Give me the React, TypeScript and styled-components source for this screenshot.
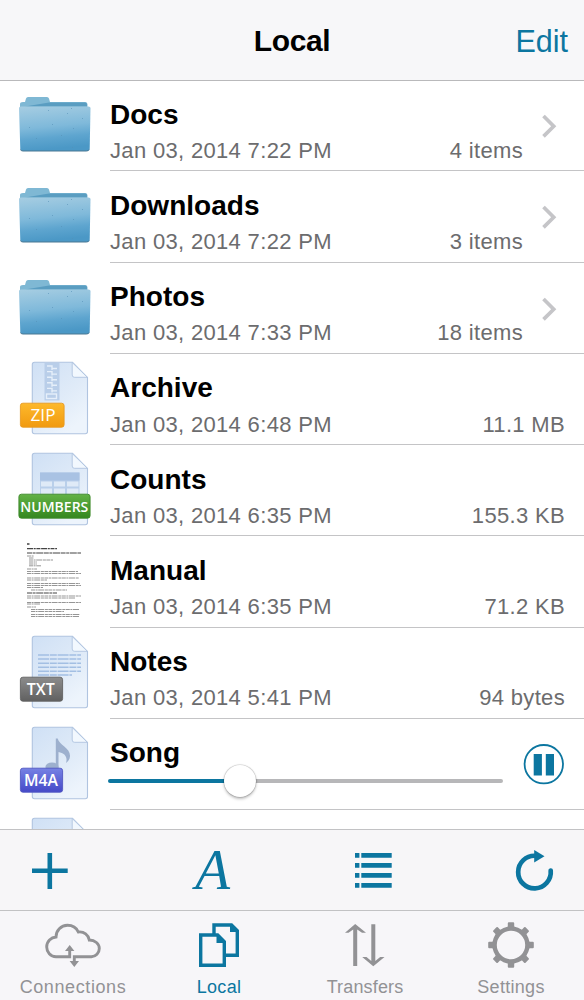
import React from "react";
import styled, { createGlobalStyle } from "styled-components";

const ACCENT = "#0c76a0";
const MUTED = "#929295";

const GlobalStyle = createGlobalStyle`
  * { box-sizing: border-box; }
  body {
    margin: 0;
    background: #fff;
    font-family: "Liberation Sans", Arial, sans-serif;
    -webkit-font-smoothing: antialiased;
  }
  svg { display: block; }
`;

const Screen = styled.div`
  width: 584px;
  height: 1000px;
  display: flex;
  flex-direction: column;
  overflow: hidden;
  background: #fff;
`;

const Header = styled.header`
  flex: none;
  height: 81px;
  margin-bottom: -1px;
  display: grid;
  grid-template-columns: 1fr auto 1fr;
  align-items: center;
  padding: 2px 16px 0;
  background: #f7f7f9;
  border-bottom: 1px solid #b9b9bb;
`;

const HeaderTitle = styled.h1`
  grid-column: 2;
  margin: 0;
  font-size: 30px;
  line-height: 34px;
  letter-spacing: -0.4px;
  color: #000;
`;

const EditButton = styled.button`
  justify-self: end;
  padding: 0;
  border: 0;
  background: none;
  font-family: inherit;
  font-size: 30.5px;
  line-height: 34px;
  color: ${ACCENT};
`;

const List = styled.main`
  flex: none;
  height: 749px;
  overflow: hidden;
`;

const Row = styled.div`
  height: 91.25px;
  display: flex;
`;

const IconCell = styled.div`
  flex: none;
  width: 110px;
`;

const RowBody = styled.div`
  flex: 1;
  min-width: 0;
  display: flex;
  border-bottom: 1px solid #c4c4c6;
`;

const RowText = styled.div<{ $right: number }>`
  flex: 1;
  padding: 18.7px ${(p) => p.$right}px 0 0;
`;

const Name = styled.div`
  font-size: 28px;
  font-weight: 700;
  line-height: 32px;
  letter-spacing: 0.02px;
  color: #000;
`;

const Meta = styled.div`
  display: flex;
  justify-content: space-between;
  margin-top: 7.2px;
  font-size: 22px;
  line-height: 26px;
  letter-spacing: 0.33px;
  color: #6c6c6e;
  white-space: nowrap;
`;

const ChevronCell = styled.div`
  flex: none;
  width: 61px;
  padding: 34px 0 0 19px;
`;

const Slider = styled.div`
  display: flex;
  align-items: center;
  height: 33px;
  margin: -5px 0 0 -2px;
`;

const Track = styled.div<{ $filled?: boolean }>`
  height: 4px;
  border-radius: 2px;
  flex: ${(p) => (p.$filled ? "0 0 118px" : "1")};
  margin: ${(p) => (p.$filled ? "0 -2px 0 0" : "0 0 0 -2px")};
  background: ${(p) => (p.$filled ? ACCENT : "#b7b7b9")};
`;

const Thumb = styled.div`
  flex: none;
  width: 32px;
  height: 32px;
  border-radius: 50%;
  background: #fff;
  box-shadow: 0 0 1px 0.5px rgba(0, 0, 0, 0.22), 0 2px 3px rgba(0, 0, 0, 0.25);
  z-index: 1;
`;

const PauseCell = styled.div`
  flex: none;
  width: 61px;
  padding-top: 25.5px;
`;

const Toolbar = styled.div`
  flex: none;
  height: 81px;
  display: flex;
  justify-content: space-between;
  align-items: center;
  padding: 0 30px;
  background: #f7f6f8;
  border-top: 1px solid #c2c2c4;
`;

const TabBar = styled.nav`
  flex: 1;
  display: grid;
  grid-template-columns: repeat(4, 1fr);
  background: #f7f6f9;
  border-top: 1px solid #c2c2c4;
`;

const Tab = styled.div<{ $active?: boolean }>`
  display: flex;
  flex-direction: column;
  align-items: center;
  padding-top: 9px;
  color: ${(p) => (p.$active ? ACCENT : MUTED)};
`;

const TabLabel = styled.span<{ $tracking?: number }>`
  margin-top: 6px;
  font-size: 18px;
  line-height: 22px;
  letter-spacing: ${(p) => p.$tracking ?? 0.3}px;
`;

const FolderIcon = () => (
  <svg width="110" height="90" viewBox="0 0 110 90">
    <defs>
      <linearGradient id="folderFront" x1="0" y1="0" x2="0.15" y2="1">
        <stop offset="0" stopColor="#a6cde2" />
        <stop offset="0.5" stopColor="#7fb9da" />
        <stop offset="0.75" stopColor="#5ea5cf" />
        <stop offset="1" stopColor="#4b98c6" />
      </linearGradient>
    </defs>
    <path d="M20 30V24q0-2 3-2h2l1-3.500q.5-1.500 2-1.500h19q1.500 0 2 1.500l1 3.500h35q2.500 0 2.500 3v6z" fill="#7fb8d4" />
    <path d="M49 22.500h36q2 0 2 2v2H25z" fill="#5a9dc1" />
    <path d="M19 28q0-1.500 2-1.500h67.500q2 0 2 1.500L89.700 69q-.2 2-2.200 2H22.500q-2 0-2.200-2z" fill="url(#folderFront)" />
    <path d="M20.500 69.500q.3 1.500 2.500 1.500h63.500q2 0 2.500-1.500" fill="none" stroke="#4b7893" strokeWidth="1" />
    <g fill="#5590b5" opacity=".6">
      <path d="M48 30h1v1h-1zM67 33h1v1h-1zM71 28h1v1h-1zM82 38h1v1h-1zM29 47h1v1h-1zM52 44h1v1h-1zM73 48h1v1h-1zM36 58h1v1h-1zM61 55h1v1h-1zM72 67h1v1h-1z" />
    </g>
  </svg>
);

const DocBase = () => (
  <>
    <defs>
      <linearGradient id="paper" x1="0" y1="0" x2="0.6" y2="1">
        <stop offset="0" stopColor="#cfe0f5" />
        <stop offset="0.6" stopColor="#e0ebf8" />
        <stop offset="1" stopColor="#edf4fc" />
      </linearGradient>
    </defs>
    <path d="M34.500 8.300H72.500L87.500 23.500V77.500q0 2.200-2.200 2.200H34.500q-2.200 0-2.200-2.200V10.500q0-2.200 2.200-2.200z" fill="url(#paper)" stroke="#b0c4e0" strokeWidth="1.100" />
    <path d="M72.200 8.500V21q0 2.300 2.300 2.300h12.800z" fill="#f2f8fe" stroke="#b0c4e0" strokeWidth=".9" />
  </>
);

const BADGES = {
  ZIP: { x: 20, w: 44.5, cx: 43, top: "#fdb92c", bottom: "#f19a10", edge: "#e89a22", size: 15.5, len: 25, weight: 400 },
  NUMBERS: { x: 18.5, w: 72, cx: 54.3, top: "#63b246", bottom: "#348720", edge: "#3f8a2d", size: 15, len: 68, weight: 600 },
  TXT: { x: 20, w: 43, cx: 40.8, top: "#8c8c8c", bottom: "#606060", edge: "#626262", size: 15.5, len: 28, weight: 600 },
  M4A: { x: 20, w: 43, cx: 41, top: "#7682e4", bottom: "#4549c8", edge: "#5057c2", size: 15.5, len: 34, weight: 600 },
} as const;

type Kind = keyof typeof BADGES;

const Badge = ({ kind }: { kind: Kind }) => {
  const b = BADGES[kind];
  return (
    <>
      <defs>
        <linearGradient id={`badge${kind}`} x1="0" y1="0" x2="0" y2="1">
          <stop offset="0" stopColor={b.top} />
          <stop offset="1" stopColor={b.bottom} />
        </linearGradient>
      </defs>
      <rect x={b.x + 0.4} y="49.200" width={b.w - 0.8} height="24" rx="2.500" fill={`url(#badge${kind})`} stroke={b.edge} strokeWidth=".9" />
      <text
        x={b.cx}
        y="66.600"
        textAnchor="middle"
        textLength={b.len}
        lengthAdjust="spacingAndGlyphs"
        fontFamily="'Open Sans', sans-serif"
        fontSize={b.size}
        fontWeight={b.weight}
        fill="#fff"
      >
        {kind}
      </text>
    </>
  );
};

const ZipArt = () => (
  <g>
    <rect x="44.500" y="9" width="15" height="37.500" fill="#b9cee9" />
    {[0, 1, 2, 3, 4].map((i) => (
      <path key={i} d={`M47 ${12 + i * 5.6}h5v4M57 ${14.5 + i * 5.6}h-5`} stroke="#e6effa" strokeWidth="1.400" fill="none" />
    ))}
    <rect x="46.500" y="40" width="10" height="4.500" fill="none" stroke="#e6effa" strokeWidth="1.400" />
  </g>
);

const TableArt = () => (
  <g>
    <rect x="40" y="27.500" width="39.500" height="24" fill="#b9cfea" />
    <rect x="40" y="27.500" width="39.500" height="8" fill="#a9c2e3" />
    <path d="M41 36.500h11v5h-11zM54 36.500h11v5H54zM67 36.500h11.500v5H67zM41 43.500h11v6h-11zM54 43.500h11v6H54zM67 43.500h11.500v6H67z" fill="#dfeaf7" />
  </g>
);

const LinesArt = () => (
  <path d="M38 27h43M38 31h43M38 35.200h43M38 39.200h43M38 43.300h43M38 47h34" stroke="#a3bfe3" strokeWidth="1.500" strokeDasharray="11 .8 7 .8" />
);

const NoteArt = () => (
  <g fill="#9db0ce">
    <path d="M55.800 19.500h1.900C59 26 70.500 29 70 37.200C69.800 40.500 68 42.500 66 44C68 38 64.500 34 58.500 33V50H55.800z" />
    <ellipse cx="52" cy="48" rx="6.600" ry="4.600" />
  </g>
);

const ART: Record<Kind, React.FC> = { ZIP: ZipArt, NUMBERS: TableArt, TXT: LinesArt, M4A: NoteArt };

const DocIcon = ({ kind }: { kind?: Kind }) => {
  const Art = kind && ART[kind];
  return (
    <svg width="110" height="90" viewBox="0 0 110 90">
      <DocBase />
      {Art && <Art />}
      {kind && <Badge kind={kind} />}
    </svg>
  );
};

const ManualIcon = () => (
  <svg width="110" height="90" viewBox="0 0 110 90" fill="none" stroke="#222">
    <path d="M27 8h2.500" strokeWidth="1.300" />
    <path d="M27 12.700h30" strokeWidth="1.200" strokeDasharray="6 .7 2 .7 4 .7" opacity=".85" />
    <path d="M27 17h54M27 57h30" strokeWidth="1" strokeDasharray="5 .6 3 .6 7 .6" opacity=".85" />
    <path
      d="M27 20h7M29 22h5M29 24h24M29 26h8M29 28h8M29 29.800h12M27 33h10M27 35.500h51M27 37.500h54M27 42h52M27 44h20M27 47.500h53M27 49.500h54M27 51.500h16M31 54h36M27 60h54M27 62h48M27 66.500h54M27 68h13M27 71h9M31 73.500h48M31 75.500h33M31 78.500h49M31 80.500h48"
      strokeWidth=".8"
      opacity=".6"
      strokeDasharray="4 .6 2 .6 6 .7 3 .5"
    />
  </svg>
);

const Chevron = () => (
  <svg width="17" height="25" viewBox="0 0 17 25">
    <path d="M1.500 2L11.700 12.200L1.500 22.400" fill="none" stroke="#c5c5c8" strokeWidth="3.700" />
  </svg>
);

const PauseButton = () => (
  <svg width="42" height="42" viewBox="0 0 42 42">
    <circle cx="20.800" cy="20.200" r="19.200" fill="#fff" stroke={ACCENT} strokeWidth="1.800" />
    <path d="M10.700 10h8.200v21.500h-8.200zM22.800 10h8.200v21.500H22.800z" fill={ACCENT} />
  </svg>
);

const PlusIcon = () => (
  <svg width="40" height="44" viewBox="0 0 40 44">
    <path d="M2 22.800h35.700M19.800 5v36" stroke={ACCENT} strokeWidth="4.600" />
  </svg>
);

const FontGlyph = styled.span`
  width: 40px;
  padding-left: 4px;
  font-family: "Liberation Serif", serif;
  font-style: italic;
  font-size: 57px;
  line-height: 64px;
  color: ${ACCENT};
  white-space: nowrap;
`;

const ListIcon = () => (
  <svg width="40" height="44" viewBox="0 0 40 44" fill={ACCENT}>
    {[5, 15, 25, 35].map((y) => (
      <path key={y} d={`M2 ${y}h4.400v4.800H2zM8.300 ${y}h30.400v4.800H8.300z`} />
    ))}
  </svg>
);

const ReloadIcon = () => (
  <svg width="40" height="44" viewBox="0 0 40 44">
    <path d="M36.700 22.500A16.300 16.300 0 1 1 21.500 7.800" fill="none" stroke={ACCENT} strokeWidth="4.700" strokeLinecap="round" />
    <path d="M20.200 2L30.500 8.300L20.200 14.500z" fill={ACCENT} />
  </svg>
);

const CloudIcon = () => (
  <svg width="60" height="50" viewBox="0 0 60 50" fill="none" stroke="currentColor" strokeWidth="2.900">
    <path d="M26.700 28V36.700H13C7.500 36.700 3.700 32 3.700 27C3.700 21.500 8 17.300 13 17C13 10.500 18 5.300 24.500 5.300C29.500 5.300 33.500 8 35.300 12C41 11.300 45.500 15 46.300 20C52 20 56.300 23.800 56.300 28.500C56.300 33 52.700 36.700 48.500 36.700H31.300V43" />
    <path d="M22 31L26.700 25L31.400 31zM26.600 41L31.300 47L36 41z" fill="currentColor" stroke="none" />
  </svg>
);

const FilesIcon = () => (
  <svg width="60" height="50" viewBox="0 0 60 50" fill="none" stroke="currentColor" strokeWidth="3.400">
    <path d="M25 14V5H42.500L48.300 10.700V35.300H37M11.700 15H28.600L35.300 21.700V45.300H11.700z" />
    <path d="M41 5V12H49L49 10L43 4zM27.500 15V23H36V21L29 14z" fill="currentColor" stroke="none" />
  </svg>
);

const TransfersIcon = () => (
  <svg width="60" height="50" viewBox="0 0 60 50" fill="currentColor">
    <path d="M20.200 4L31 12.700H27L22.200 9.400V46H18.200V9.400L13.500 12.700H10zM36.300 4.300H40.300V41L45.200 37H49.500L38.300 46.200L27.200 37H31.500L36.300 41z" />
  </svg>
);

const GearIcon = () => (
  <svg width="60" height="50" viewBox="0 0 60 50">
    <circle cx="30" cy="25" r="16.400" fill="none" stroke="currentColor" strokeWidth="4.400" />
    {[0, 45, 90, 135, 180, 225, 270, 315].map((a) => (
      <path key={a} d="M24.500 8.500L26.800 6.500V3.200q0-1 1-1h4.400q1 0 1 1V6.500L35.500 8.500z" fill="currentColor" transform={`rotate(${a} 30 25)`} />
    ))}
  </svg>
);

type FileItem = { name: string; date: string; info: string; icon: React.ReactNode; folder?: boolean };

const FILES: FileItem[] = [
  { name: "Docs", date: "Jan 03, 2014 7:22 PM", info: "4 items", icon: <FolderIcon />, folder: true },
  { name: "Downloads", date: "Jan 03, 2014 7:22 PM", info: "3 items", icon: <FolderIcon />, folder: true },
  { name: "Photos", date: "Jan 03, 2014 7:33 PM", info: "18 items", icon: <FolderIcon />, folder: true },
  { name: "Archive", date: "Jan 03, 2014 6:48 PM", info: "11.1 MB", icon: <DocIcon kind="ZIP" /> },
  { name: "Counts", date: "Jan 03, 2014 6:35 PM", info: "155.3 KB", icon: <DocIcon kind="NUMBERS" /> },
  { name: "Manual", date: "Jan 03, 2014 6:35 PM", info: "71.2 KB", icon: <ManualIcon /> },
  { name: "Notes", date: "Jan 03, 2014 5:41 PM", info: "94 bytes", icon: <DocIcon kind="TXT" /> },
];

const FileRow = ({ file }: { file: FileItem }) => (
  <Row>
    <IconCell>{file.icon}</IconCell>
    <RowBody>
      <RowText $right={file.folder ? 0 : 19}>
        <Name>{file.name}</Name>
        <Meta>
          <span>{file.date}</span>
          <span>{file.info}</span>
        </Meta>
      </RowText>
      {file.folder && (
        <ChevronCell>
          <Chevron />
        </ChevronCell>
      )}
    </RowBody>
  </Row>
);

export default function App() {
  return (
    <>
      <GlobalStyle />
      <Screen>
        <Header>
          <HeaderTitle>Local</HeaderTitle>
          <EditButton>Edit</EditButton>
        </Header>
        <List>
          {FILES.map((f) => (
            <FileRow key={f.name} file={f} />
          ))}
          <Row>
            <IconCell>
              <DocIcon kind="M4A" />
            </IconCell>
            <RowBody>
              <RowText $right={20}>
                <Name>Song</Name>
                <Slider>
                  <Track $filled />
                  <Thumb />
                  <Track />
                </Slider>
              </RowText>
              <PauseCell>
                <PauseButton />
              </PauseCell>
            </RowBody>
          </Row>
          <Row>
            <IconCell>
              <DocIcon />
            </IconCell>
          </Row>
        </List>
        <Toolbar>
          <PlusIcon />
          <FontGlyph>A</FontGlyph>
          <ListIcon />
          <ReloadIcon />
        </Toolbar>
        <TabBar>
          <Tab>
            <CloudIcon />
            <TabLabel $tracking={0.6}>Connections</TabLabel>
          </Tab>
          <Tab $active>
            <FilesIcon />
            <TabLabel>Local</TabLabel>
          </Tab>
          <Tab>
            <TransfersIcon />
            <TabLabel $tracking={0.15}>Transfers</TabLabel>
          </Tab>
          <Tab>
            <GearIcon />
            <TabLabel>Settings</TabLabel>
          </Tab>
        </TabBar>
      </Screen>
    </>
  );
}
